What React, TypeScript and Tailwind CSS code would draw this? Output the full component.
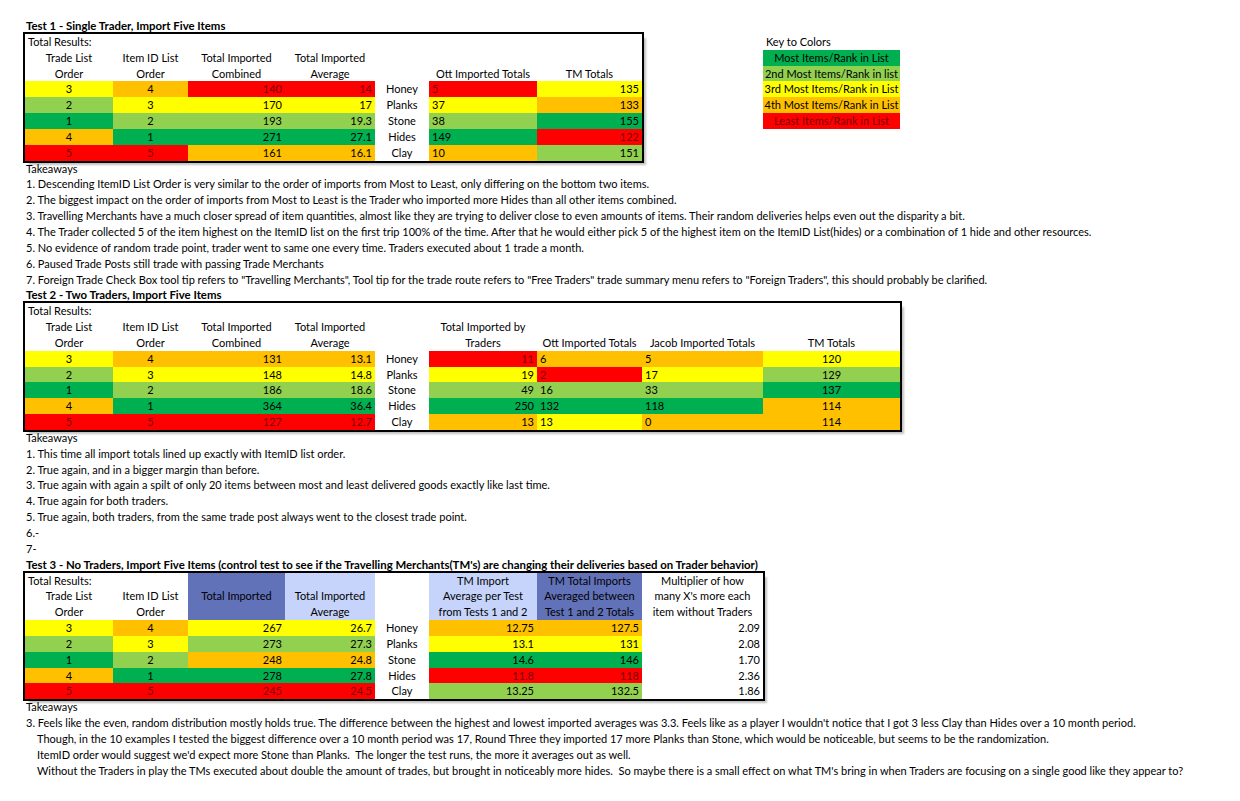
import React from 'react';

type Fill = 'G' | 'LG' | 'Y' | 'O' | 'R' | 'DB' | 'LB' | '';
type Cell = { t?: string; c?: Fill; a?: 'l' | 'c' | 'r' };

const fills: Record<string, string> = {
    G: 'bg-[#00b050]',
    LG: 'bg-[#92d050]',
    Y: 'bg-[#ffff00]',
    O: 'bg-[#ffc000]',
    R: 'bg-[#ff0000] text-[#7a0000]',
    DB: 'bg-[#6272b8]',
    LB: 'bg-[#c6d4fb]',
    '': '',
};

const aligns = {
    l: 'justify-start pl-[3px]',
    c: 'justify-center',
    r: 'justify-end pr-[3px]',
};

const COLS7 = 'grid-cols-[88px_75px_97px_90px_54px_108px_105px]';
const COLS8 = 'grid-cols-[88px_75px_97px_90px_54px_108px_105px_121px]';
const COLS9 = 'grid-cols-[88px_75px_97px_90px_54px_108px_105px_121px_137px]';

const Row: React.FC<{ cols: string; cells: Cell[] }> = ({ cols, cells }) => (
    <div className={`grid ${cols} h-[15.85px]`}>
        {cells.map((cell, i) => (
            <div
                key={i}
                className={`flex items-center whitespace-nowrap leading-[15.85px] ${aligns[cell.a || 'c']} ${fills[cell.c || '']}`}
            >
                {cell.t}
            </div>
        ))}
    </div>
);

const Line: React.FC<{ children?: React.ReactNode; bold?: boolean; indent?: boolean }> = ({ children, bold, indent }) => (
    <div
        className={`h-[15.85px] leading-[15.85px] whitespace-nowrap ${bold ? 'font-bold text-[11.4px]' : ''} ${indent ? 'pl-[12px]' : 'pl-[1px]'}`}
    >
        {children}
    </div>
);

const Table: React.FC<{ children: React.ReactNode }> = ({ children }) => (
    <div className="w-fit ring-2 ring-black shadow-[4px_4px_2px_rgba(0,0,0,0.25)] bg-white">{children}</div>
);

const items = ['Honey', 'Planks', 'Stone', 'Hides', 'Clay'];

// rank cells shared by every test: trade list order + item id order
const rankA: [string, Fill][] = [['3', 'Y'], ['2', 'LG'], ['1', 'G'], ['4', 'O'], ['5', 'R']];
const rankB: [string, Fill][] = [['4', 'O'], ['3', 'Y'], ['2', 'LG'], ['1', 'G'], ['5', 'R']];

const test1: [string, Fill, string, Fill, string, Fill, string, Fill][] = [
    ['140', 'R', '14', 'R', '5', 'R', '135', 'Y'],
    ['170', 'Y', '17', 'Y', '37', 'Y', '133', 'O'],
    ['193', 'LG', '19.3', 'LG', '38', 'LG', '155', 'G'],
    ['271', 'G', '27.1', 'G', '149', 'G', '122', 'R'],
    ['161', 'O', '16.1', 'O', '10', 'O', '151', 'LG'],
];

const test2: [string, Fill, string, Fill, string, Fill, string, Fill, string, Fill, string, Fill][] = [
    ['131', 'O', '13.1', 'O', '11', 'R', '6', 'O', '5', 'O', '120', 'Y'],
    ['148', 'Y', '14.8', 'Y', '19', 'Y', '2', 'R', '17', 'Y', '129', 'LG'],
    ['186', 'LG', '18.6', 'LG', '49', 'LG', '16', 'LG', '33', 'LG', '137', 'G'],
    ['364', 'G', '36.4', 'G', '250', 'G', '132', 'G', '118', 'G', '114', 'O'],
    ['127', 'R', '12.7', 'R', '13', 'O', '13', 'Y', '0', 'O', '114', 'O'],
];

const test3: [string, Fill, string, Fill, string, Fill, string, Fill, string][] = [
    ['267', 'Y', '26.7', 'Y', '12.75', 'O', '127.5', 'O', '2.09'],
    ['273', 'LG', '27.3', 'LG', '13.1', 'Y', '131', 'Y', '2.08'],
    ['248', 'O', '24.8', 'O', '14.6', 'G', '146', 'G', '1.70'],
    ['278', 'G', '27.8', 'G', '11.8', 'R', '118', 'R', '2.36'],
    ['245', 'R', '24.5', 'R', '13.25', 'LG', '132.5', 'LG', '1.86'],
];

const keyRows: [string, Fill][] = [
    ['Most Items/Rank in List', 'G'],
    ['2nd Most Items/Rank in list', 'LG'],
    ['3rd Most Items/Rank in List', 'Y'],
    ['4th Most Items/Rank in List', 'O'],
    ['Least Items/Rank in List', 'R'],
];

const App: React.FC = () => {
    return (
        <div className="w-[1240px] h-[801px] overflow-hidden bg-white text-black pl-[25px] pt-[18px] text-[11px] font-['Lato','Open_Sans',sans-serif]">
            {/* Test 1 */}
            <Line bold>Test 1 - Single Trader, Import Five Items</Line>
            <div className="flex items-start">
                <Table>
                    <Row cols={COLS7} cells={[{ t: 'Total Results:', a: 'l' }]} />
                    <Row cols={COLS7} cells={[{ t: 'Trade List' }, { t: 'Item ID List' }, { t: 'Total Imported' }, { t: 'Total Imported' }]} />
                    <Row
                        cols={COLS7}
                        cells={[{ t: 'Order' }, { t: 'Order' }, { t: 'Combined' }, { t: 'Average' }, {}, { t: 'Ott Imported Totals' }, { t: 'TM Totals' }]}
                    />
                    {test1.map((r, i) => (
                        <Row
                            key={i}
                            cols={COLS7}
                            cells={[
                                { t: rankA[i][0], c: rankA[i][1] },
                                { t: rankB[i][0], c: rankB[i][1] },
                                { t: r[0], c: r[1], a: 'r' },
                                { t: r[2], c: r[3], a: 'r' },
                                { t: items[i] },
                                { t: r[4], c: r[5], a: 'l' },
                                { t: r[6], c: r[7], a: 'r' },
                            ]}
                        />
                    ))}
                </Table>
                <div className="ml-[121px] w-[137px]">
                    <div className="h-[15.85px] leading-[15.85px] pl-[3px]">Key to Colors</div>
                    {keyRows.map(([t, c]) => (
                        <div key={t} className={`h-[15.85px] leading-[15.85px] text-center whitespace-nowrap ${fills[c]}`}>
                            {t}
                        </div>
                    ))}
                </div>
            </div>
            <Line>Takeaways</Line>
            <Line>1. Descending ItemID List Order is very similar to the order of imports from Most to Least, only differing on the bottom two items.</Line>
            <Line>2. The biggest impact on the order of imports from Most to Least is the Trader who imported more Hides than all other items combined.</Line>
            <Line>3. Travelling Merchants have a much closer spread of item quantities, almost like they are trying to deliver close to even amounts of items. Their random deliveries helps even out the disparity a bit.</Line>
            <Line>4. The Trader collected 5 of the item highest on the ItemID list on the first trip 100% of the time. After that he would either pick 5 of the highest item on the ItemID List(hides) or a combination of 1 hide and other resources.</Line>
            <Line>5. No evidence of random trade point, trader went to same one every time. Traders executed about 1 trade a month.</Line>
            <Line>6. Paused Trade Posts still trade with passing Trade Merchants</Line>
            <Line>7. Foreign Trade Check Box tool tip refers to "Travelling Merchants", Tool tip for the trade route refers to "Free Traders" trade summary menu refers to "Foreign Traders", this should probably be clarified.</Line>

            {/* Test 2 */}
            <Line bold>Test 2 - Two Traders, Import Five Items</Line>
            <Table>
                <Row cols={COLS9} cells={[{ t: 'Total Results:', a: 'l' }]} />
                <Row
                    cols={COLS9}
                    cells={[{ t: 'Trade List' }, { t: 'Item ID List' }, { t: 'Total Imported' }, { t: 'Total Imported' }, {}, { t: 'Total Imported by' }]}
                />
                <Row
                    cols={COLS9}
                    cells={[
                        { t: 'Order' },
                        { t: 'Order' },
                        { t: 'Combined' },
                        { t: 'Average' },
                        {},
                        { t: 'Traders' },
                        { t: 'Ott Imported Totals' },
                        { t: 'Jacob Imported Totals' },
                        { t: 'TM Totals' },
                    ]}
                />
                {test2.map((r, i) => (
                    <Row
                        key={i}
                        cols={COLS9}
                        cells={[
                            { t: rankA[i][0], c: rankA[i][1] },
                            { t: rankB[i][0], c: rankB[i][1] },
                            { t: r[0], c: r[1], a: 'r' },
                            { t: r[2], c: r[3], a: 'r' },
                            { t: items[i] },
                            { t: r[4], c: r[5], a: 'r' },
                            { t: r[6], c: r[7], a: 'l' },
                            { t: r[8], c: r[9], a: 'l' },
                            { t: r[10], c: r[11] },
                        ]}
                    />
                ))}
            </Table>
            <Line>Takeaways</Line>
            <Line>1. This time all import totals lined up exactly with ItemID list order.</Line>
            <Line>2. True again, and in a bigger margin than before.</Line>
            <Line>3. True again with again a spilt of only 20 items between most and least delivered goods exactly like last time.</Line>
            <Line>4. True again for both traders.</Line>
            <Line>5. True again, both traders, from the same trade post always went to the closest trade point.</Line>
            <Line>6.-</Line>
            <Line>7-</Line>

            {/* Test 3 */}
            <Line bold>Test 3 - No Traders, Import Five Items (control test to see if the Travelling Merchants(TM's) are changing their deliveries based on Trader behavior)</Line>
            <Table>
                <Row
                    cols={COLS8}
                    cells={[
                        { t: 'Total Results:', a: 'l' },
                        {},
                        { c: 'DB' },
                        { c: 'LB' },
                        {},
                        { t: 'TM Import', c: 'LB' },
                        { t: 'TM Total Imports', c: 'DB' },
                        { t: 'Multiplier of how' },
                    ]}
                />
                <Row
                    cols={COLS8}
                    cells={[
                        { t: 'Trade List' },
                        { t: 'Item ID List' },
                        { t: 'Total Imported', c: 'DB' },
                        { t: 'Total Imported', c: 'LB' },
                        {},
                        { t: 'Average per Test', c: 'LB' },
                        { t: 'Averaged between', c: 'DB' },
                        { t: "many X's more each" },
                    ]}
                />
                <Row
                    cols={COLS8}
                    cells={[
                        { t: 'Order' },
                        { t: 'Order' },
                        { c: 'DB' },
                        { t: 'Average', c: 'LB' },
                        {},
                        { t: 'from Tests 1 and 2', c: 'LB' },
                        { t: 'Test 1 and 2 Totals', c: 'DB' },
                        { t: 'item without Traders' },
                    ]}
                />
                {test3.map((r, i) => (
                    <Row
                        key={i}
                        cols={COLS8}
                        cells={[
                            { t: rankA[i][0], c: rankA[i][1] },
                            { t: rankB[i][0], c: rankB[i][1] },
                            { t: r[0], c: r[1], a: 'r' },
                            { t: r[2], c: r[3], a: 'r' },
                            { t: items[i] },
                            { t: r[4], c: r[5], a: 'r' },
                            { t: r[6], c: r[7], a: 'r' },
                            { t: r[8], a: 'r' },
                        ]}
                    />
                ))}
            </Table>
            <Line>Takeaways</Line>
            <Line>3. Feels like the even, random distribution mostly holds true. The difference between the highest and lowest imported averages was 3.3. Feels like as a player I wouldn't notice that I got 3 less Clay than Hides over a 10 month period.</Line>
            <Line indent>Though, in the 10 examples I tested the biggest difference over a 10 month period was 17, Round Three they imported 17 more Planks than Stone, which would be noticeable, but seems to be the randomization.</Line>
            <Line indent>ItemID order would suggest we'd expect more Stone than Planks.&nbsp; The longer the test runs, the more it averages out as well.</Line>
            <Line indent>Without the Traders in play the TMs executed about double the amount of trades, but brought in noticeably more hides.&nbsp; So maybe there is a small effect on what TM's bring in when Traders are focusing on a single good like they appear to?</Line>
        </div>
    );
};

export default App;
